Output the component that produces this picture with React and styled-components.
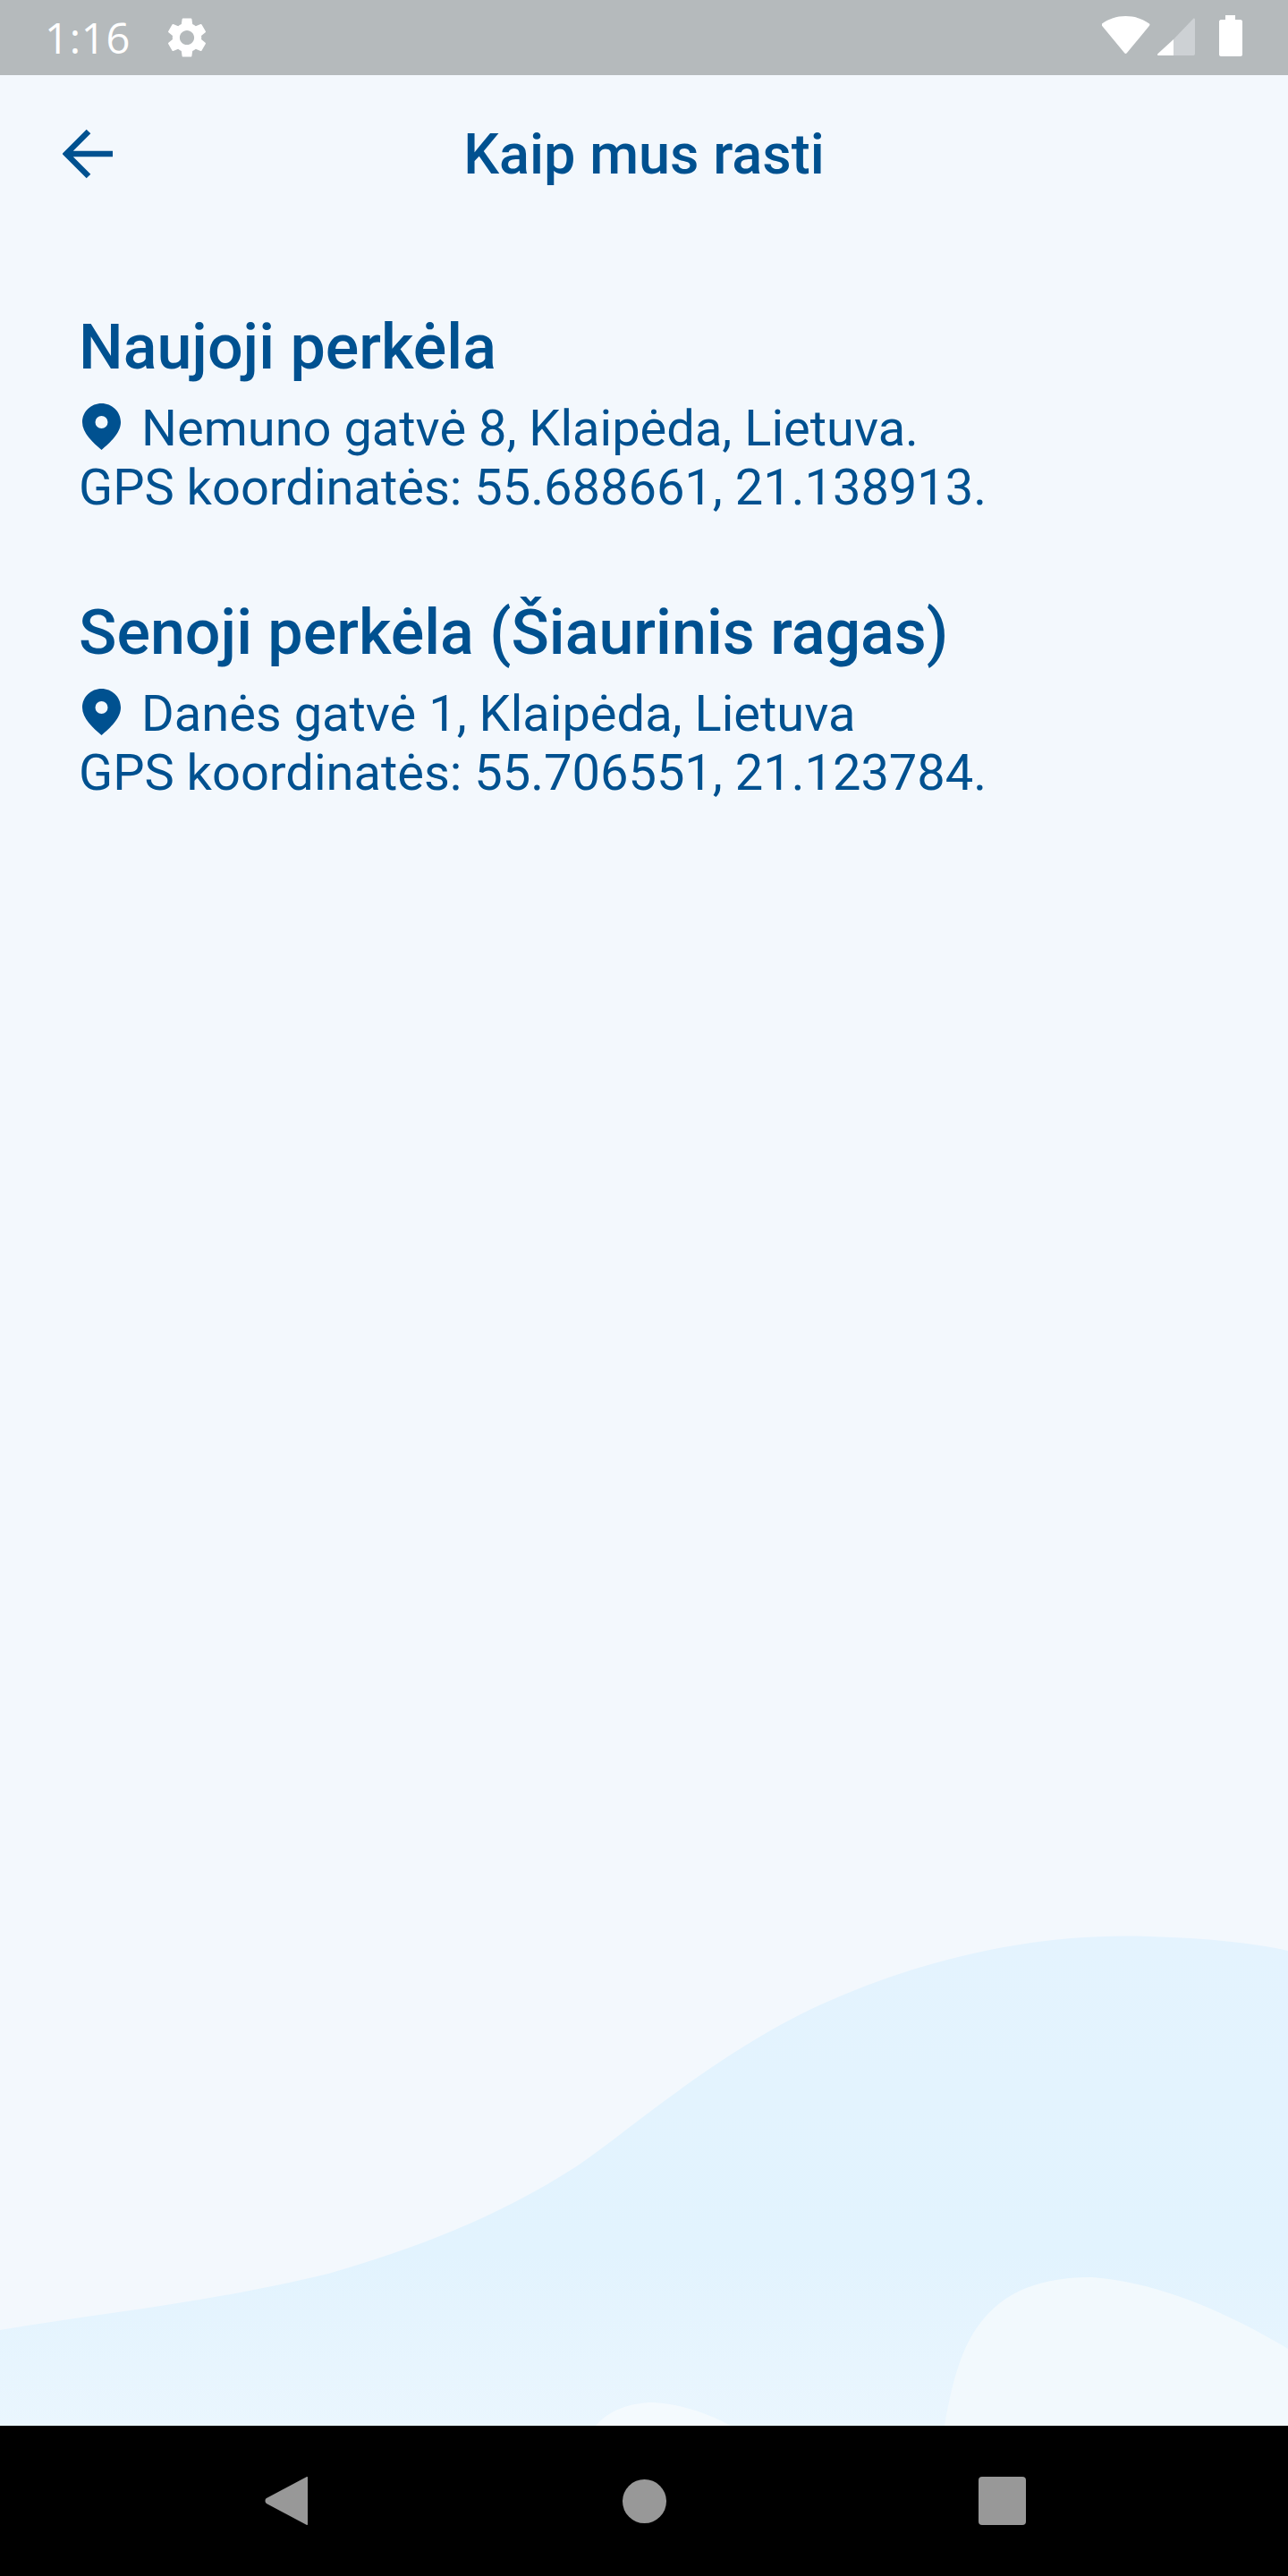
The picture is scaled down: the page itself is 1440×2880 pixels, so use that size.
import React from "react";
import styled, { createGlobalStyle } from "styled-components";

const BLUE = "#005190";

const GlobalStyle = createGlobalStyle`
  html, body {
    margin: 0;
    padding: 0;
    background: #f3f8fd;
  }
  * {
    box-sizing: border-box;
  }
`;

/* =========================
      PAGE
========================= */
const Page = styled.div`
  width: 1440px;
  height: 2880px;
  display: flex;
  flex-direction: column;
  overflow: hidden;
  font-family: "Roboto", "Liberation Sans", sans-serif;
  color: ${BLUE};
`;

/* =========================
      STATUS BAR
========================= */
const StatusBar = styled.div`
  height: 84px;
  flex: none;
  background: #b5babc;
  display: flex;
  align-items: center;
  justify-content: space-between;
  padding: 0 51px 0 50px;
  color: #fff;
`;

const StatusGroup = styled.div`
  display: flex;
  align-items: center;
  gap: ${(p) => p.$gap}px;
`;

const Clock = styled.span`
  font-family: "Open Sans", "Roboto", sans-serif;
  font-size: 47px;
  line-height: 84px;
  letter-spacing: 0.8px;
`;

/* =========================
      MAIN AREA
========================= */
const Main = styled.main`
  position: relative;
  flex: 1;
  background: #f3f8fd;
`;

const Wave = styled.svg`
  position: absolute;
  left: 0;
  bottom: 0;
  display: block;
`;

const TopBar = styled.header`
  position: relative;
  height: 176px;
  display: flex;
  align-items: center;
  justify-content: center;
`;

const BackButton = styled.button`
  position: absolute;
  left: 70px;
  top: 60px;
  width: 56px;
  height: 56px;
  padding: 0;
  border: none;
  background: none;
  display: flex;
`;

const PageTitle = styled.h1`
  margin: 0;
  font-size: 63px;
  line-height: 1;
  font-weight: 500;
`;

const Content = styled.div`
  position: relative;
  padding: 80px 88px 0;
  display: flex;
  flex-direction: column;
  gap: 81px;
`;

const Place = styled.section`
  display: flex;
  flex-direction: column;
`;

const PlaceName = styled.h2`
  margin: 0 0 10px;
  font-size: 70px;
  line-height: 96px;
  font-weight: 500;
`;

const PlaceLine = styled.p`
  margin: 0;
  height: 66px;
  font-size: 56px;
  line-height: 66px;
  font-weight: 400;
  display: flex;
  align-items: center;
  white-space: pre;
`;

const Pin = styled.svg`
  flex: none;
  margin: -4px 22px 0 3px;
`;

/* =========================
      NAV BAR
========================= */
const NavBar = styled.nav`
  height: 168px;
  flex: none;
  background: #000;
  display: grid;
  grid-template-columns: repeat(3, 1fr);
  align-items: center;
  justify-items: center;
  padding: 0 120px;
`;

const NavCircle = styled.div`
  width: 49px;
  height: 49px;
  border-radius: 50%;
  background: #989898;
`;

const NavSquare = styled.div`
  width: 53px;
  height: 54px;
  border-radius: 4px;
  background: #989898;
`;

const PlacePin = () => (
  <Pin width="45" height="52" viewBox="0 0 43 52">
    <path
      fill={BLUE}
      fillRule="evenodd"
      d="M21.5 0C33 0 43 9 43 21C43 33 31 44 21.5 52C12 44 0 33 0 21C0 9 10 0 21.5 0ZM21.5 14a7 7 0 1 0 0 14a7 7 0 0 0 0-14Z"
    />
  </Pin>
);

const places = [
  {
    name: "Naujoji perkėla",
    address: "Nemuno gatvė 8, Klaipėda, Lietuva.",
    gps: "GPS koordinatės: 55.688661, 21.138913.",
  },
  {
    name: "Senoji perkėla (Šiaurinis ragas)",
    address: "Danės gatvė 1, Klaipėda, Lietuva",
    gps: "GPS koordinatės: 55.706551, 21.123784.",
  },
];

export default function App() {
  return (
    <Page>
      <GlobalStyle />
      <StatusBar>
        <StatusGroup $gap={36}>
          <Clock>1:16</Clock>
          <svg width="54" height="54" viewBox="0 0 24 24">
            <path
              fill="#fff"
              d="M19.14 12.94c.04-.3.06-.61.06-.94 0-.32-.02-.64-.07-.94l2.03-1.58a.49.49 0 0 0 .12-.61l-1.92-3.32a.488.488 0 0 0-.59-.22l-2.39.96c-.5-.38-1.03-.7-1.62-.94l-.36-2.54a.484.484 0 0 0-.48-.41h-3.84c-.24 0-.43.17-.47.41l-.36 2.54c-.59.24-1.13.57-1.62.94l-2.39-.96c-.22-.08-.47 0-.59.22L2.74 8.87c-.12.21-.08.47.12.61l2.03 1.58c-.05.3-.09.63-.09.94s.02.64.07.94l-2.03 1.58a.49.49 0 0 0-.12.61l1.92 3.32c.12.22.37.29.59.22l2.39-.96c.5.38 1.03.7 1.62.94l.36 2.54c.05.24.24.41.48.41h3.84c.24 0 .44-.17.47-.41l.36-2.54c.59-.24 1.13-.56 1.62-.94l2.39.96c.22.08.47 0 .59-.22l1.92-3.32c.12-.22.07-.47-.12-.61l-2.01-1.58zM12 15.6c-1.98 0-3.6-1.62-3.6-3.6s1.62-3.6 3.6-3.6 3.6 1.62 3.6 3.6-1.62 3.6-3.6 3.6z"
            />
          </svg>
        </StatusGroup>
        <StatusGroup $gap={0}>
          <svg width="157" height="50" viewBox="0 0 157 50">
            {/* wifi */}
            <path
              fill="#fff"
              d="M0 9.5C8 4 16 1 26.5 1C37 1 45 4 53 9.5C53.6 10 53.6 11 53 11.7L28 42C27 43.2 26 43.2 25 42L0 11.7C-.6 11-.6 10 0 9.5Z"
            />
            {/* signal */}
            <path fill="#cdd1d4" d="M80 27L102 4C103 3 104 4 104 5V43C104 44.5 103 45 102 45H80Z" />
            <path fill="#fff" d="M80 27V45H63C62 45 61.5 44 62.5 43Z" />
            {/* battery */}
            <path
              fill="#fff"
              d="M138 0H149V5H155C156 5 157 6 157 7V44C157 45 156 46 155 46H133C132 46 131 45 131 44V7C131 6 132 5 133 5H138Z"
            />
          </svg>
        </StatusGroup>
      </StatusBar>

      <Main>
        <Wave width="1440" height="628" viewBox="0 2084 1440 628">
          <defs>
            <linearGradient id="waveFill" x1="0" y1="0" x2="0" y2="1">
              <stop offset="0" stopColor="#e4f3fe" />
              <stop offset="0.65" stopColor="#e2f3fe" />
              <stop offset="1" stopColor="#eaf6fe" />
            </linearGradient>
          </defs>
          <path
            fill="url(#waveFill)"
            d="M0 2605C120 2585 230 2575 367 2542C460 2515 555 2480 643 2423C700 2385 800 2295 918 2241C1030 2190 1160 2160 1286 2165C1350 2167 1400 2172 1440 2181V2712H0Z"
          />
          <path
            fill="#f2f9fd"
            d="M1056 2712C1070 2640 1085 2545 1221 2546C1300 2552 1380 2590 1440 2626V2712Z"
          />
          <path fill="#f4fafe" d="M666 2712C680 2695 705 2686 730 2686C765 2688 795 2700 817 2712Z" />
        </Wave>

        <TopBar>
          <BackButton aria-label="Atgal">
            <svg width="56" height="56" viewBox="0 0 56 56">
              <path d="M56 28H4M29 3L4 28L29 53" fill="none" stroke={BLUE} strokeWidth="6.5" />
            </svg>
          </BackButton>
          <PageTitle>Kaip mus rasti</PageTitle>
        </TopBar>

        <Content>
          {places.map((place) => (
            <Place key={place.name}>
              <PlaceName>{place.name}</PlaceName>
              <PlaceLine>
                <PlacePin />
                {place.address}
              </PlaceLine>
              <PlaceLine>{place.gps}</PlaceLine>
            </Place>
          ))}
        </Content>
      </Main>

      <NavBar>
        <svg width="48" height="56" viewBox="0 0 50 58">
          <path fill="#989898" d="M49 1L2 26C0 27.5 0 30.5 2 32L49 57C49.5 57.2 50 57 50 56V2C50 1 49.5 .8 49 1Z" />
        </svg>
        <NavCircle />
        <NavSquare />
      </NavBar>
    </Page>
  );
}
